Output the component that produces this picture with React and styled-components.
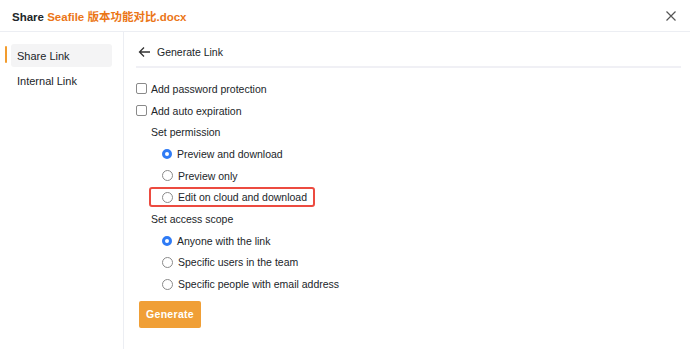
import React, { useState } from "react";
import styled, { createGlobalStyle } from "styled-components";

const GlobalStyle = createGlobalStyle`
  body {
    margin: 0;
    background: #ffffff;
    font-family: "Liberation Sans", "Noto Sans CJK SC", Arial, sans-serif;
    color: #212529;
  }
`;

const permissions = [
  "Preview and download",
  "Preview only",
  "Edit on cloud and download",
];

const scopes = [
  "Anyone with the link",
  "Specific users in the team",
  "Specific people with email address",
];

function App() {
  const [perm, setPerm] = useState(0);
  const [scope, setScope] = useState(0);

  return (
    <Dialog>
      <GlobalStyle />
      <Header>
        <Title>
          Share <FileName>Seafile 版本功能对比.docx</FileName>
        </Title>
        <CloseButton>
          <svg width="12" height="12" viewBox="0 0 12 12">
            <path d="M1.5 1.5 L10.5 10.5 M10.5 1.5 L1.5 10.5" stroke="#555" strokeWidth="1.2" />
          </svg>
        </CloseButton>
      </Header>
      <Body>
        <Sidebar>
          <NavItem active>Share Link</NavItem>
          <NavItem>Internal Link</NavItem>
        </Sidebar>
        <Main>
          <TopBar>
            <svg width="13" height="12" viewBox="0 0 13 12">
              <path d="M12 6 H1.5 M6 1.5 L1.5 6 L6 10.5" stroke="#333" strokeWidth="1.3" fill="none" />
            </svg>
            <span>Generate Link</span>
          </TopBar>
          <CheckRow>
            <Box />
            Add password protection
          </CheckRow>
          <CheckRow>
            <Box />
            Add auto expiration
          </CheckRow>
          <Label>Set permission</Label>
          {permissions.map((p, i) => (
            <RadioRow key={p} highlight={i === 2} onClick={() => setPerm(i)}>
              <Radio checked={perm === i} />
              {p}
            </RadioRow>
          ))}
          <Label>Set access scope</Label>
          {scopes.map((s, i) => (
            <RadioRow key={s} onClick={() => setScope(i)}>
              <Radio checked={scope === i} />
              {s}
            </RadioRow>
          ))}
          <GenerateButton>Generate</GenerateButton>
        </Main>
      </Body>
    </Dialog>
  );
}

export default App;

const Dialog = styled.div`
  width: 690px;
  height: 349px;
  display: flex;
  flex-direction: column;
  background: #fff;
  overflow: hidden;
`;

const Header = styled.div`
  height: 32px;
  flex-shrink: 0;
  display: flex;
  align-items: center;
  justify-content: space-between;
  padding: 0 13px 0 12px;
  border-bottom: 1px solid #eceef3;
  box-sizing: border-box;
`;

const Title = styled.div`
  font-size: 11.5px;
  font-weight: 700;
  color: #212529;
`;

const FileName = styled.span`
  color: #eb7617;
`;

const CloseButton = styled.div`
  display: flex;
  align-items: center;
`;

const Body = styled.div`
  flex: 1;
  display: flex;
`;

const Sidebar = styled.div`
  width: 124px;
  flex-shrink: 0;
  border-right: 1px solid #eceef3;
  padding: 12px 11px 0 5px;
  box-sizing: border-box;
  display: flex;
  flex-direction: column;
  gap: 2px;
`;

const NavItem = styled.div`
  position: relative;
  height: 23px;
  display: flex;
  align-items: center;
  margin-left: 6px;
  padding-left: 6px;
  font-size: 11px;
  color: #212529;
  border-radius: 3px;
  background: ${(p) => (p.active ? "#f4f4f5" : "transparent")};
  &::before {
    content: "";
    display: ${(p) => (p.active ? "block" : "none")};
    position: absolute;
    left: -6px;
    top: 2px;
    width: 2px;
    height: 17px;
    border-radius: 1px;
    background: #f29c2e;
  }
`;

const Main = styled.div`
  flex: 1;
  padding: 0 9px 0 12px;
  display: flex;
  flex-direction: column;
`;

const TopBar = styled.div`
  height: 28px;
  margin-top: 6px;
  display: flex;
  align-items: center;
  gap: 6px;
  padding-left: 2px;
  font-size: 10.5px;
  color: #212529;
  border-bottom: 2px solid #f0f0f5;
  margin-bottom: 10px;
`;

const CheckRow = styled.div`
  height: 21.7px;
  display: flex;
  align-items: center;
  gap: 4px;
  font-size: 10.5px;
  color: #212529;
`;

const Box = styled.span`
  width: 9px;
  height: 9px;
  border: 1px solid #8a8a8a;
  border-radius: 2px;
`;

const Label = styled.div`
  height: 21.7px;
  display: flex;
  align-items: center;
  padding-left: 15px;
  font-size: 10.5px;
  color: #212529;
`;

const RadioRow = styled.div`
  height: 21.7px;
  display: flex;
  align-items: center;
  font-size: 10.5px;
  color: #212529;
  padding-left: 26px;
  gap: 5px;
  position: relative;
  &::after {
    content: "";
    display: ${(p) => (p.highlight ? "block" : "none")};
    position: absolute;
    left: 13px;
    width: 162px;
    top: 1px;
    height: 16px;
    border: 2px solid #ec4b40;
    border-radius: 3px;
  }
`;

const Radio = styled.span`
  width: ${(p) => (p.checked ? "4px" : "9px")};
  height: ${(p) => (p.checked ? "4px" : "9px")};
  border-radius: 50%;
  border: ${(p) => (p.checked ? "3.5px solid #2f7bf5" : "1px solid #8a8a8a")};
  background: #fff;
`;

const GenerateButton = styled.button`
  align-self: flex-start;
  margin-top: 6px;
  margin-left: 3px;
  width: 62px;
  height: 27px;
  border: none;
  border-radius: 2px;
  background: #f09f36;
  color: #fff;
  font-family: inherit;
  font-size: 10.5px;
  font-weight: 700;
  letter-spacing: 0.3px;
`;
